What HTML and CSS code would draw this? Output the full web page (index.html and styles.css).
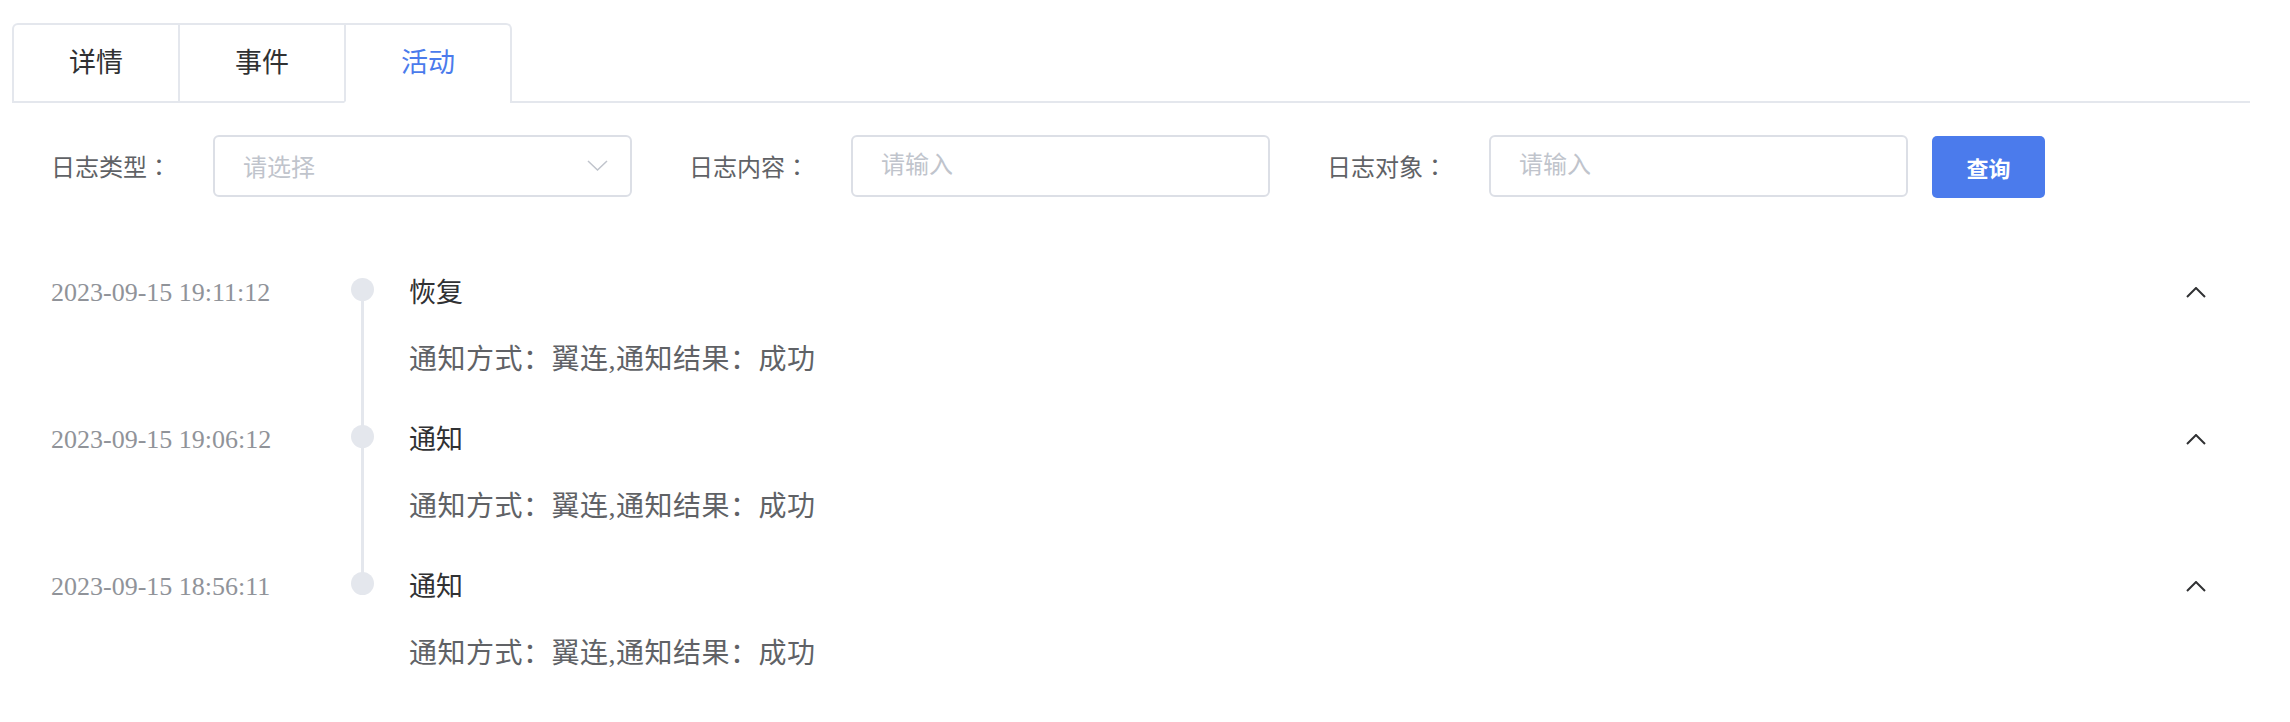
FILE: index.html
```html
<!DOCTYPE html>
<html lang="zh-CN">
<head>
  <meta charset="UTF-8">
  <meta name="viewport" content="width=device-width,initial-scale=1">
  <title>活动</title>
  <link rel="stylesheet" href="styles.css">
</head>
<body>
  <div class="page">
    <!-- 标签页 -->
    <div class="tabs">
      <div class="tabs-nav">
        <div class="tab">详情</div>
        <div class="tab">事件</div>
        <div class="tab active">活动</div>
      </div>
    </div>

    <!-- 查询条件 -->
    <div class="filter">
      <div class="field">
        <label class="label" lang="zh-TW">日志类型：</label>
        <div class="select">
          <span class="placeholder">请选择</span>
          <svg class="select-arrow" width="21" height="11" viewBox="0 0 21 11"><polyline points="1,1 10.5,10 20,1" fill="none" stroke="#c0c4cc" stroke-width="1.5"/></svg>
        </div>
      </div>
      <div class="field">
        <label class="label" lang="zh-TW">日志内容：</label>
        <input class="input" type="text" placeholder="请输入">
      </div>
      <div class="field">
        <label class="label" lang="zh-TW">日志对象：</label>
        <input class="input" type="text" placeholder="请输入">
      </div>
      <button class="btn">查询</button>
    </div>

    <!-- 时间线 -->
    <ul class="timeline">
      <li class="item">
        <div class="time">2023-09-15 19:11:12</div>
        <div class="axis"><span class="dot"></span></div>
        <div class="content">
          <div class="title">恢复</div>
          <div class="desc">通知方式：翼连,通知结果：成功</div>
        </div>
        <svg class="fold" width="20" height="11" viewBox="0 0 20 11"><polyline points="1,10 10,1 19,10" fill="none" stroke="#303133" stroke-width="2"/></svg>
      </li>
      <li class="item">
        <div class="time">2023-09-15 19:06:12</div>
        <div class="axis"><span class="dot"></span></div>
        <div class="content">
          <div class="title">通知</div>
          <div class="desc">通知方式：翼连,通知结果：成功</div>
        </div>
        <svg class="fold" width="20" height="11" viewBox="0 0 20 11"><polyline points="1,10 10,1 19,10" fill="none" stroke="#303133" stroke-width="2"/></svg>
      </li>
      <li class="item">
        <div class="time">2023-09-15 18:56:11</div>
        <div class="axis"><span class="dot"></span></div>
        <div class="content">
          <div class="title">通知</div>
          <div class="desc">通知方式：翼连,通知结果：成功</div>
        </div>
        <svg class="fold" width="20" height="11" viewBox="0 0 20 11"><polyline points="1,10 10,1 19,10" fill="none" stroke="#303133" stroke-width="2"/></svg>
      </li>
    </ul>
  </div>
</body>
</html>
```

FILE: styles.css
```css
/* 样式重置 */
body{
  margin:0;
  font-family:"Liberation Serif","Noto Sans CJK SC",serif;
  color:#303133;
  background:#fff;
}
ul{
  margin:0;
  padding:0;
  list-style:none;
}
input,button{
  font-family:inherit;
  outline:none;
}
.page{
  padding:23px 40px 0 12px;
}

/* 标签页 */
.tabs{
  border-bottom:2px solid #e4e7ed;
}
.tabs-nav{
  display:inline-flex;
  border:2px solid #e4e7ed;
  border-bottom:0;
  border-radius:6px 6px 0 0;
  margin-bottom:-2px;
}
.tab{
  width:164px;
  height:76px;
  line-height:76px;
  text-align:center;
  font-size:27px;
  color:#303133;
  border-bottom:2px solid #e4e7ed;
}
.tab + .tab{
  border-left:2px solid #e4e7ed;
}
.tab.active{
  color:#4b7bec;
  border-bottom-color:#fff;
}

/* 查询条件 */
.filter{
  display:flex;
  align-items:center;
  margin-top:30px;
  padding-left:39px;
}
.field{
  display:flex;
  align-items:center;
  margin-right:57px;
}
.field:nth-child(3){
  margin-right:24px;
}
.label{
  width:162px;
  font-family:"Liberation Serif","Noto Sans CJK TC",serif;
  font-size:24px;
  color:#606266;
}
.select,
.input{
  box-sizing:border-box;
  width:419px;
  height:62px;
  border:2px solid #dcdfe6;
  border-radius:6px;
  padding:0 28px;
  font-size:24px;
  color:#606266;
  background:#fff;
}
.select{
  display:flex;
  align-items:center;
  justify-content:space-between;
  padding-right:22px;
}
.placeholder,
.input::placeholder{
  color:#c0c4cc;
}
.btn{
  width:113px;
  height:62px;
  border:0;
  border-radius:5px;
  background:#4b7bec;
  color:#fff;
  font-family:"Noto Sans CJK SC",sans-serif;
  font-size:22px;
  font-weight:bold;
  margin-top:3px;
}

/* 时间线 */
.timeline{
  margin-top:75px;
  padding-left:39px;
  padding-right:44px;
}
.item{
  display:grid;
  grid-template-columns:299px 24px 1fr 20px;
}
.time{
  font-size:26px;
  line-height:40px;
  color:#909399;
}
.axis{
  display:flex;
  justify-content:center;
  background:linear-gradient(#e4e7ed,#e4e7ed) no-repeat center top / 3px 100%;
}
.item:first-child .axis{
  background-position:center 16px;
}
.item:last-child .axis{
  background-size:3px 16px;
}
.dot{
  width:23px;
  height:23px;
  margin-top:5px;
  border-radius:50%;
  background:#e4e7ed;
}
.content{
  padding:0 0 40px 35px;
}
.title{
  font-size:27px;
  line-height:40px;
  color:#303133;
}
.desc{
  margin-top:27px;
  font-size:28px;
  line-height:40px;
  letter-spacing:0.5px;
  color:#606266;
}
.fold{
  margin-top:14px;
}
```
